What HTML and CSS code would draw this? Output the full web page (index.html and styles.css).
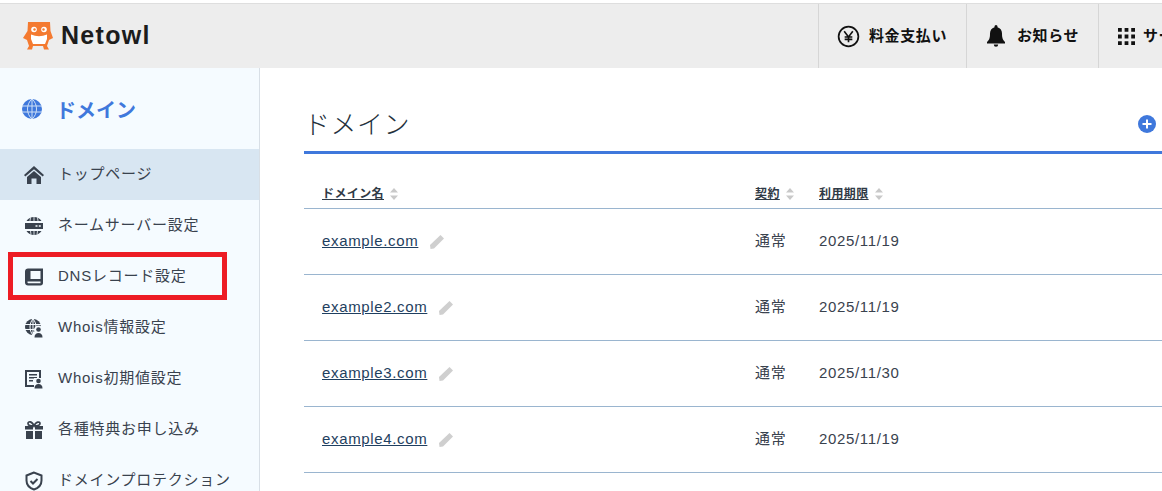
FILE: index.html
```html
<!DOCTYPE html>
<html lang="ja">
<head>
<meta charset="utf-8">
<title>ドメイン</title>
<link rel="stylesheet" href="styles.css">
</head>
<body>
<div class="page">
  <header class="topbar">
    <div class="brand">
      <svg class="owl" viewBox="0 0 30 28" width="30" height="28">
        <path fill="#f47a30" d="M5 0h20l2 0 .5 9L30 16l-4 2-2 6 2 3.500h-5l-1-3.500H10l-1 3.500H4l2-3.500-2-6-4-2 4.500-7z"/>
        <path fill="#fff" d="M8 12.500q8 3.500 16 0V17l-2 5H10l-2-5z"/>
        <circle cx="11" cy="7.500" r="2.800" fill="#fff"/>
        <circle cx="21" cy="7.500" r="2.800" fill="#fff"/>
        <circle cx="11.500" cy="7.500" r="1.200" fill="#f47a30"/>
        <circle cx="20.500" cy="7.500" r="1.200" fill="#f47a30"/>
      </svg>
      <span class="brand-name">Netowl</span>
    </div>
    <nav class="top-actions">
      <a class="top-item top-pay">
        <svg viewBox="0 0 24 24" width="23" height="23"><circle cx="12" cy="12" r="10.300" fill="none" stroke="#111" stroke-width="1.800"/><path d="M7.500 6.500 12 12.500l4.500-6M12 12.500V18M8 12.500h8M8 15h8" fill="none" stroke="#111" stroke-width="1.700"/></svg>
        <span>料金支払い</span>
      </a>
      <a class="top-item top-news">
        <svg viewBox="0 0 20 24" width="20" height="24"><path fill="#111" d="M10 1a1.500 1.500 0 0 1 1.500 1.500v.700C14.500 4 16 6.500 16 9.500c0 5 1 6.500 3 8.500v1.500H1V18c2-2 3-3.500 3-8.500C4 6.500 5.500 4 8.500 3.200v-.700A1.500 1.500 0 0 1 10 1zM7.800 20.500h4.400a2.200 2.200 0 0 1-4.400 0z"/></svg>
        <span>お知らせ</span>
      </a>
      <a class="top-item top-service">
        <svg viewBox="0 0 18 18" width="17" height="17"><path fill="#111" d="M0 0h4v4H0zM7 0h4v4H7zM14 0h4v4h-4zM0 7h4v4H0zM7 7h4v4H7zM14 7h4v4h-4zM0 14h4v4H0zM7 14h4v4H7zM14 14h4v4h-4z"/></svg>
        <span>サービス</span>
      </a>
    </nav>
  </header>
  <div class="body">
    <aside class="sidebar">
      <div class="side-title">
        <svg viewBox="0 0 20 20" width="20" height="20"><circle cx="10" cy="10" r="10" fill="#3f78dc"/><path d="M0 7h20M0 13h20M10 0v20M10 0c-6 5-6 15 0 20M10 0c6 5 6 15 0 20" fill="none" stroke="#cfe0f7" stroke-width="1"/></svg>
        <span>ドメイン</span>
      </div>
      <ul class="side-nav">
        <li class="side-item active">
          <svg viewBox="0 0 20 20" width="20" height="20"><path fill="#39424e" d="M10 1 0 10l1.300 1.600L10 4.300l8.700 7.300L20 10zM3 12l7-6 7 6V19h-4.500V13.500h-5V19H3z"/></svg>
          <span>トップページ</span>
        </li>
        <li class="side-item">
          <svg viewBox="0 0 20 20" width="20" height="20"><path fill="#39424e" d="M2.500 5A9 9 0 0 1 17.500 5zM1 7h18v6H1zM2.500 15h15a9 9 0 0 1-15 0z"/><path fill="none" stroke="#f5fbff" stroke-width=".8" d="M10 1v4M6.500 1.500 6 5M13.500 1.500 14 5M10 15v4M6.500 15l.5 3.500M13.500 15l-.5 3.500"/><path fill="#f5fbff" d="M11.500 9.300h2v1.400h-2zM14.800 9.300h2v1.400h-2z"/></svg>
          <span>ネームサーバー設定</span>
        </li>
        <li class="side-item">
          <svg viewBox="0 0 20 20" width="20" height="20"><path fill="#39424e" fill-rule="evenodd" d="M4 1.500h15v14.500c0 1.400-1 2.500-2.500 2.500H4c-1.700 0-3-1.300-3-3V4.500c0-1.700 1.300-3 3-3zM6.500 4v8H16.500V4zM3.500 14.500v1c0 .5.300.8.800.8h12.200v-1.800z"/></svg>
          <span>DNSレコード設定</span>
        </li>
        <li class="side-item">
          <svg viewBox="0 0 20 20" width="20" height="20"><circle cx="9" cy="9" r="8" fill="#39424e"/><path d="M1 6.500h16M1 11.500h16M9 1v16M9 1c-4 4-4 12 0 16M9 1c4 4 4 12 0 16" fill="none" stroke="#f5fbff" stroke-width="1"/><circle cx="14.500" cy="12" r="4.500" fill="#f5fbff"/><circle cx="14.500" cy="11.500" r="2.300" fill="#39424e"/><path fill="#f5fbff" d="M9 14h11v6H9z"/><path fill="#39424e" d="M10.500 19.500c0-3 1.500-4.500 4-4.500s4 1.500 4 4.500z"/></svg>
          <span>Whois情報設定</span>
        </li>
        <li class="side-item">
          <svg viewBox="0 0 20 20" width="20" height="20"><path fill="#39424e" fill-rule="evenodd" d="M1 1h16v17H1zM3 3v13h12V3z"/><path fill="#39424e" d="M5 5h8v1.500H5zM5 8h8v1.500H5zM5 11h4v1.500H5z"/><path fill="#f5fbff" d="M10 9h10v11H10z"/><circle cx="14.500" cy="12" r="2.300" fill="#39424e"/><path fill="#39424e" d="M10.500 19.500c0-3 1.500-4.500 4-4.500s4 1.500 4 4.500z"/></svg>
          <span>Whois初期値設定</span>
        </li>
        <li class="side-item">
          <svg viewBox="0 0 20 20" width="20" height="20"><path fill="#39424e" d="M1 6h8v3.500H1zM11 6h8v3.500h-8zM2 11h7v8H2zM11 11h7v8h-7z"/><path fill="none" stroke="#39424e" stroke-width="1.700" d="M10 6C8 1 4 1 4 3.500S7 6 10 6c3 0 6-.5 6-2.500S12 1 10 6z"/></svg>
          <span>各種特典お申し込み</span>
        </li>
        <li class="side-item">
          <svg viewBox="0 0 20 20" width="20" height="20"><path fill="none" stroke="#39424e" stroke-width="2" d="M10 1.500 2.500 4.500v5c0 4.500 3 7.500 7.500 9 4.500-1.500 7.500-4.500 7.500-9v-5z"/><path fill="none" stroke="#39424e" stroke-width="2" d="m6.500 10 2.500 2.500 4.500-4.500"/></svg>
          <span>ドメインプロテクション</span>
        </li>
      </ul>
    </aside>
    <main class="content">
      <div class="heading">
        <h1>ドメイン</h1>
        <svg class="add" viewBox="0 0 18 18" width="18" height="18"><circle cx="9" cy="9" r="9" fill="#3f78dc"/><path d="M4.500 9h9M9 4.500v9" stroke="#fff" stroke-width="2"/></svg>
      </div>
      <table class="domains">
        <thead>
          <tr>
            <th class="col-name"><a>ドメイン名</a><svg class="sort" viewBox="0 0 8 12" width="8" height="12"><path fill="#c9c9c9" d="M4 0l4 4.500H0zM4 12l4-4.500H0z"/></svg></th>
            <th class="col-plan"><a>契約</a><svg class="sort" viewBox="0 0 8 12" width="8" height="12"><path fill="#c9c9c9" d="M4 0l4 4.500H0zM4 12l4-4.500H0z"/></svg></th>
            <th><a>利用期限</a><svg class="sort" viewBox="0 0 8 12" width="8" height="12"><path fill="#c9c9c9" d="M4 0l4 4.500H0zM4 12l4-4.500H0z"/></svg></th>
          </tr>
        </thead>
        <tbody>
          <tr>
            <td><a class="domain">example.com</a><svg class="edit" viewBox="0 0 14 14" width="14" height="14"><path fill="#cfcfcf" d="M10.500 0 14 3.500 4 13.500.500 14 0 10z"/></svg></td>
            <td class="plan">通常</td><td>2025/11/19</td>
          </tr>
          <tr>
            <td><a class="domain">example2.com</a><svg class="edit" viewBox="0 0 14 14" width="14" height="14"><path fill="#cfcfcf" d="M10.500 0 14 3.500 4 13.500.500 14 0 10z"/></svg></td>
            <td class="plan">通常</td><td>2025/11/19</td>
          </tr>
          <tr>
            <td><a class="domain">example3.com</a><svg class="edit" viewBox="0 0 14 14" width="14" height="14"><path fill="#cfcfcf" d="M10.500 0 14 3.500 4 13.500.500 14 0 10z"/></svg></td>
            <td class="plan">通常</td><td>2025/11/30</td>
          </tr>
          <tr>
            <td><a class="domain">example4.com</a><svg class="edit" viewBox="0 0 14 14" width="14" height="14"><path fill="#cfcfcf" d="M10.500 0 14 3.500 4 13.500.500 14 0 10z"/></svg></td>
            <td class="plan">通常</td><td>2025/11/19</td>
          </tr>
        </tbody>
      </table>
    </main>
  </div>
  <div class="highlight"></div>
</div>
</body>
</html>
```
FILE: styles.css
```css
* { box-sizing: border-box; }
html, body { margin: 0; padding: 0; height: 100%; overflow: hidden; background: #fff; }
body { font-family: "Liberation Sans", "Noto Sans CJK JP", sans-serif; color: #39424e; font-size: 14px; }
.page { position: relative; width: 1162px; height: 491px; overflow: hidden; padding-top: 3px; }

.topbar { display: flex; justify-content: space-between; height: 65px; background: #ededed; border-top: 1px solid #dedede; }
.brand { display: flex; align-items: center; gap: 8px; padding: 0 0 0 23px; }
.owl { display: block; }
.brand-name { font-weight: 700; font-size: 25px; color: #1c1c1c; letter-spacing: 1.3px; margin-bottom: 2px; }
.top-actions { display: flex; width: 344px; flex: none; }
.top-item { display: flex; align-items: center; gap: 9px; border-left: 1px solid #d6d6d6; font-weight: 700; font-size: 15px; letter-spacing: 0.6px; color: #111; white-space: nowrap; flex: none; }
.top-item span { margin-bottom: 3px; }
.top-pay { width: 148px; padding-left: 18px; }
.top-news { width: 132px; padding-left: 19px; gap: 11px; }
.top-service { width: 64px; padding-left: 19px; overflow: hidden; gap: 8px; }
.top-actions svg { flex: none; }

.body { display: flex; height: 423px; }
.sidebar { width: 260px; flex: none; background: #f5fbff; border-right: 1px solid #d8dfe6; padding-top: 30px; }
.side-title { display: flex; align-items: center; gap: 14px; padding-left: 22px; height: 22px; font-size: 20px; font-weight: 700; color: #3f78dc; margin-bottom: 29px; }
.side-nav { list-style: none; margin: 0; padding: 0; }
.side-item { display: flex; align-items: center; gap: 14px; height: 51px; padding-left: 24px; font-size: 15px; color: #39424e; letter-spacing: 0.75px; white-space: nowrap; }
.side-item span { margin-bottom: 5px; }
.side-item svg { flex: none; }
.side-item.active { background: #d8e6f2; }

.content { flex: 1; min-width: 0; padding: 0 0 0 44px; }
.heading { display: flex; justify-content: space-between; align-items: center; height: 86px; padding: 26px 0 0; border-bottom: 3px solid #3f78dc; width: 858px; }
.heading h1 { margin: 0; font-size: 26px; font-weight: 300; color: #24303c; letter-spacing: 0.5px; }
.add { flex: none; margin: 3px 6px 0 0; }
.domains { border-collapse: collapse; table-layout: fixed; width: 858px; margin-top: 18px; }
.domains th { height: 36px; padding: 6px 0 0 18px; text-align: left; font-size: 12px; font-weight: 700; letter-spacing: 0.4px; border-bottom: 1px solid #9ab5cf; vertical-align: middle; }
.col-name { width: 433px; }
.col-plan { width: 64px; }
.domains th a { text-decoration: underline; color: #2f3a46; }
.sort { margin-left: 6px; vertical-align: -2px; }
.domains td { height: 66px; padding: 0 0 2px 18px; border-bottom: 1px solid #9ab5cf; font-size: 15px; letter-spacing: 0.65px; color: #39424e; vertical-align: middle; }
.domains td.plan { padding-bottom: 3px; }
.domain { text-decoration: underline; color: #1f3f60; }
.edit { margin-left: 12px; vertical-align: -3px; }

.highlight { position: absolute; left: 8px; top: 252px; width: 219px; height: 48px; border: 5px solid #ed1c24; }
```
